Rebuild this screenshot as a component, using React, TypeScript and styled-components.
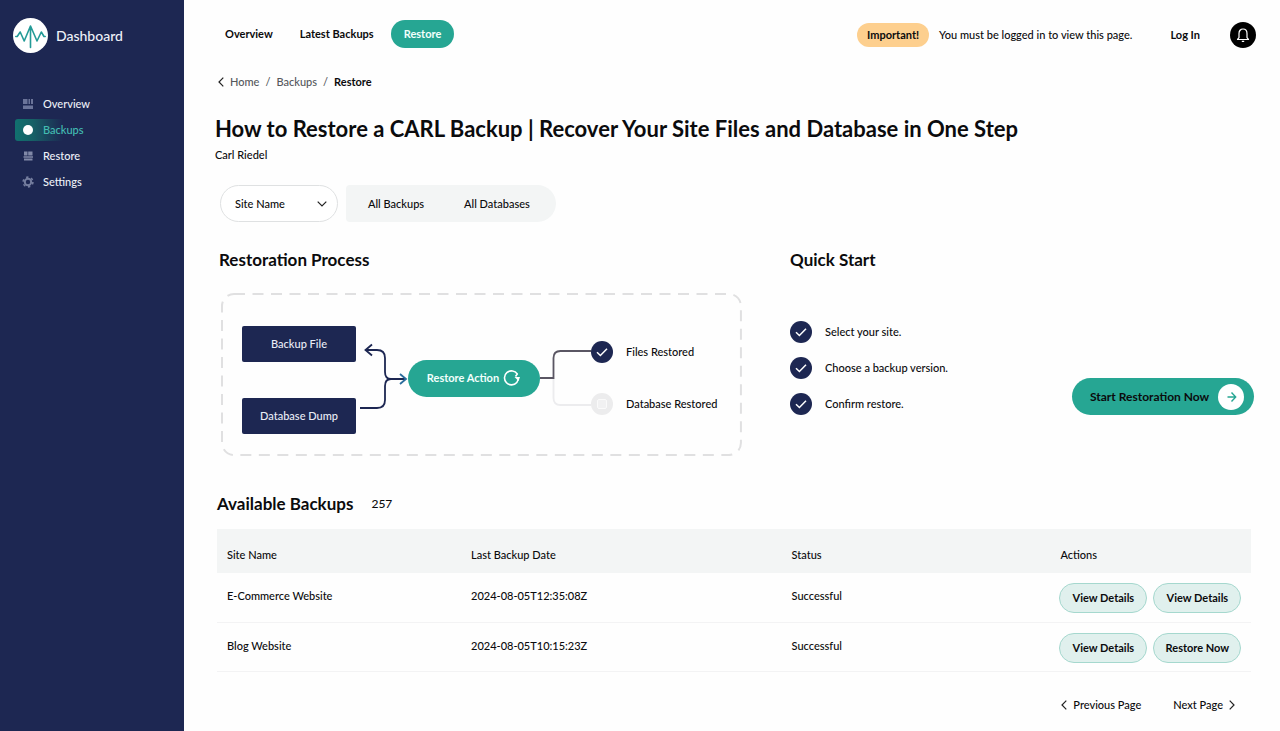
import React from 'react';
import styled, { createGlobalStyle } from 'styled-components';

const navy = '#1d2752';
const teal = '#26a693';

const GlobalStyle = createGlobalStyle`
  * { box-sizing: border-box; }
  body {
    margin: 0;
    background: #fefefe;
    color: #0b0b0d;
    font: 500 11px/16px Lato, "Open Sans", sans-serif;
  }
  button, select { font: inherit; color: inherit; cursor: pointer; }
  a { color: inherit; text-decoration: none; }
  h1, h2, p, ul, ol { margin: 0; padding: 0; }
  ul, ol { list-style: none; }
  svg { display: block; flex: none; }
`;

const Page = styled.div`
  display: flex;
  min-height: 100vh;
`;

const Sidebar = styled.aside`
  flex: none;
  width: 184px;
  padding: 18px 13px;
  background: ${navy};
  color: #eef1f8;
`;

const Brand = styled.a`
  display: flex;
  align-items: center;
  gap: 8px;
  font-size: 14px;
  line-height: 20px;
`;

const SideNav = styled.nav`
  display: grid;
  gap: 4px;
  margin: 40px 0 0 2px;
`;

const SideLink = styled.a<{ $active?: boolean }>`
  display: flex;
  align-items: center;
  gap: 9px;
  height: 22px;
  padding-left: 7px;
  border-radius: 3px;
  color: ${p => (p.$active ? '#43bdb2' : '#eef1f8')};
  background: ${p => (p.$active ? 'linear-gradient(90deg, #11716f 0, #176066 18px, transparent 48px)' : 'none')};
`;

const Main = styled.main`
  flex: 1;
  min-width: 0;
  padding: 20px 24px 16px 31px;
`;

const TopBar = styled.header`
  display: flex;
  align-items: center;
  justify-content: space-between;
  height: 28px;
`;

const Tabs = styled.nav`
  display: flex;
  align-items: center;
  gap: 7px;
  font-weight: 700;
`;

const Tab = styled.a<{ $active?: boolean }>`
  padding: 6px ${p => (p.$active ? 13 : 10)}px;
  border-radius: 14px;
  color: ${p => (p.$active ? '#f2fffc' : 'inherit')};
  background: ${p => (p.$active ? teal : 'none')};
`;

const Notice = styled.div`
  display: flex;
  align-items: center;
  padding-top: 2px;
`;

const Badge = styled.strong`
  margin-right: 10px;
  padding: 4px 10px;
  border-radius: 12px;
  background: #fdcf8e;
`;

const LoginLink = styled.a`
  margin: 0 30px 0 38px;
  font-weight: 700;
`;

const BellButton = styled.button`
  display: grid;
  place-items: center;
  width: 26px;
  height: 26px;
  padding: 0;
  border: 0;
  border-radius: 50%;
  background: #000;
`;

const Crumbs = styled.nav`
  display: flex;
  align-items: center;
  gap: 6px;
  margin-top: 26px;
  padding-left: 3px;
  color: #55585c;
`;

const Current = styled.span`
  color: #0b0b0d;
  font-weight: 700;
`;

const Title = styled.h1`
  margin-top: 25px;
  font-size: 22px;
  line-height: 28px;
`;

const Author = styled.p`
  margin-top: 4px;
`;

const Filters = styled.div`
  display: flex;
  gap: 8px;
  margin: 22px 0 0 5px;
`;

const SelectWrap = styled.div`
  display: grid;
  align-items: center;
  width: 118px;
  > * { grid-area: 1 / 1; }
  > svg { justify-self: end; margin-right: 11px; pointer-events: none; }
`;

const SiteSelect = styled.select`
  width: 100%;
  height: 37px;
  padding: 0 14px;
  border: 1px solid #dfe1e2;
  border-radius: 19px;
  background: #fff;
  appearance: none;
`;

const Segments = styled.div`
  display: flex;
  gap: 4px;
  padding: 0 8px 0 4px;
  border-radius: 4px 19px 19px 4px;
  background: #f3f5f5;
`;

const Segment = styled.button`
  height: 37px;
  padding: 0 18px;
  border: 0;
  background: none;
`;

const Columns = styled.div`
  display: grid;
  grid-template-columns: 571fr 464fr;
  margin: 27px 2px 0 4px;
`;

const SectionTitle = styled.h2`
  font-size: 17px;
  line-height: 22px;
`;

const Panel = styled.div`
  position: relative;
  display: flex;
  align-items: center;
  height: 163px;
  margin: 22px 48px 0 2px;
  padding: 33px 21px 22px;
`;

const Dashes = styled.svg`
  position: absolute;
  inset: 0;
  width: 100%;
  height: 100%;
  pointer-events: none;
`;

const Sources = styled.div`
  display: grid;
  gap: 36px;
  width: 114px;
`;

const Source = styled.div`
  display: grid;
  place-items: center;
  height: 36px;
  border-radius: 2px;
  background: ${navy};
  color: #e9ecf6;
`;

const Flow = styled.div`
  display: flex;
  align-items: center;
  padding-bottom: 4px;
`;

const RestoreAction = styled.button`
  display: flex;
  align-items: center;
  justify-content: center;
  gap: 4px;
  width: 132px;
  height: 37px;
  padding: 0;
  border: 0;
  border-radius: 19px;
  background: ${teal};
  color: #f2fffc;
  font-weight: 700;
`;

const Results = styled.ul`
  display: grid;
  gap: 30px;
`;

const IconRow = styled.li`
  display: flex;
  align-items: center;
  gap: 13px;
  height: 22px;
  white-space: nowrap;
`;

const QuickBody = styled.div`
  display: flex;
  justify-content: space-between;
  align-items: flex-end;
  margin-top: 50px;
`;

const Steps = styled.ol`
  display: grid;
  gap: 14px;
`;

const StartButton = styled.button`
  display: flex;
  align-items: center;
  justify-content: space-between;
  width: 182px;
  height: 37px;
  padding: 0 10px 0 18px;
  border: 0;
  border-radius: 19px;
  background: ${teal};
  font-size: 12px;
  font-weight: 700;
`;

const Backups = styled.section`
  margin: 37px 5px 0 2px;
`;

const BackupsHead = styled.div`
  display: flex;
  align-items: center;
  gap: 18px;
`;

const Count = styled.span`
  font-size: 12px;
`;

const Table = styled.table`
  width: 100%;
  margin-top: 14px;
  border-collapse: collapse;
  table-layout: fixed;
  text-align: left;
  th { height: 44px; padding: 8px 10px 0; background: #f3f5f5; font-weight: 500; }
  td { height: 49px; padding: 0 10px 2px; border-bottom: 1px solid #f3f3f4; }
  td:last-child { padding: 2px 8px 0 9px; }
`;

const Col = styled.col<{ $w: number }>`
  width: ${p => p.$w}%;
`;

const Actions = styled.div`
  display: flex;
  gap: 6px;
`;

const ActionButton = styled.button`
  width: 88px;
  height: 30px;
  padding: 0;
  border: 1px solid #a5d8ce;
  border-radius: 15px;
  background: #e0f0ed;
  font-weight: 700;
`;

const Pager = styled.nav`
  display: flex;
  justify-content: flex-end;
  gap: 32px;
  margin: 25px 16px 0 0;
  a { display: flex; align-items: center; gap: 6px; }
`;

const Chevron = ({ d, w = 6, h = 10 }: { d: string; w?: number; h?: number }) => (
  <svg width={w} height={h} viewBox={`0 0 ${w} ${h}`} fill="none" stroke="#222" strokeWidth="1.2"><path d={d} /></svg>
);
const left = 'M5.3 .7 1 5l4.3 4.3';
const right = 'M.7 .7 5 5 .7 9.3';

const Check = () => (
  <svg width="22" height="22" viewBox="0 0 22 22" fill="none">
    <circle cx="11" cy="11" r="11" fill={navy} />
    <path d="m6 11.2 3.4 3.3L16 7.8" stroke="#fff" strokeWidth="1.5" />
  </svg>
);

const Pending = () => (
  <svg width="22" height="22" viewBox="0 0 22 22" fill="none">
    <circle cx="11" cy="11" r="11" fill="#ececed" />
    <rect x="6.5" y="6.5" width="9" height="9" rx="1.5" fill="#f1f1f2" stroke="#fafafa" />
  </svg>
);

const Logo = () => (
  <svg width="35" height="35" viewBox="0 0 35 35" fill="none">
    <circle cx="17.5" cy="17.5" r="17.5" fill="#fff" />
    <path d="M2.8 18.5h1.4L7.2 14l4 9L17.5 8 24 23l4.3-9 2.7 4.5h1.2M17.5 8v21.5" stroke="#249b97" strokeWidth="1.6" strokeLinejoin="round" strokeLinecap="round" />
  </svg>
);

const GridIcon = () => (
  <svg width="12" height="12" viewBox="0 0 12 12" fill="#6b7499">
    <path d="M1 1h4.5v5H1zM6.5 1H8v5H6.5zM9 1h2v5H9zM1 7.5h10V11H1z" />
  </svg>
);

const DotIcon = () => (
  <svg width="12" height="12" viewBox="0 0 12 12"><circle cx="6" cy="6" r="5" fill="#fff" /></svg>
);

const StackIcon = () => (
  <svg width="12" height="12" viewBox="0 0 12 12" fill="#8189a8">
    <path d="M2 1.5h3.5v4H2zM6.2 1.5h4.3v4H6.2zM1.5 6.3H11v1.5H1.5zM2 8.5h8.5v2H2z" />
  </svg>
);

const GearIcon = () => (
  <svg width="12" height="12" viewBox="0 0 12 12" fill="none" stroke="#747d9e">
    <circle cx="6" cy="6" r="3.2" strokeWidth="2" />
    <circle cx="6" cy="6" r="4.9" strokeWidth="1.6" strokeDasharray="2.4 2.731" />
  </svg>
);

const sideItems = [
  { label: 'Overview', icon: <GridIcon /> },
  { label: 'Backups', icon: <DotIcon />, active: true },
  { label: 'Restore', icon: <StackIcon /> },
  { label: 'Settings', icon: <GearIcon /> },
];

const rows = [
  { site: 'E-Commerce Website', date: '2024-08-05T12:35:08Z', status: 'Successful', actions: ['View Details', 'View Details'] },
  { site: 'Blog Website', date: '2024-08-05T10:15:23Z', status: 'Successful', actions: ['View Details', 'Restore Now'] },
];

export default function App() {
  return (
    <Page>
      <GlobalStyle />
      <Sidebar>
        <Brand href="#"><Logo />Dashboard</Brand>
        <SideNav aria-label="Sections">
          {sideItems.map(i => (
            <SideLink key={i.label} href="#" $active={i.active}>{i.icon}{i.label}</SideLink>
          ))}
        </SideNav>
      </Sidebar>
      <Main>
        <TopBar>
          <Tabs aria-label="Main">
            <Tab href="#">Overview</Tab>
            <Tab href="#">Latest Backups</Tab>
            <Tab href="#" $active>Restore</Tab>
          </Tabs>
          <Notice>
            <Badge>Important!</Badge>
            <span>You must be logged in to view this page.</span>
            <LoginLink href="#">Log In</LoginLink>
            <BellButton aria-label="Notifications">
              <svg width="14" height="16" viewBox="0 0 14 16" fill="none" stroke="#fff" strokeWidth="1.2">
                <path d="M1.5 12.5h11L11 10.7V6.5C11 3.800 9.200 2 7 2S3 3.800 3 6.500v4.200zM5.800 14.300h2.400" strokeLinejoin="round" />
              </svg>
            </BellButton>
          </Notice>
        </TopBar>
        <Crumbs aria-label="Breadcrumb">
          <Chevron d={left} />
          <a href="#">Home</a><span>/</span><a href="#">Backups</a><span>/</span>
          <Current aria-current="page">Restore</Current>
        </Crumbs>
        <Title>How to Restore a CARL Backup | Recover Your Site Files and Database in One Step</Title>
        <Author>Carl Riedel</Author>
        <Filters>
          <SelectWrap>
            <SiteSelect aria-label="Site Name"><option>Site Name</option></SiteSelect>
            <Chevron d="m.7 .7 4.3 4.3L9.3 .7" w={10} h={6} />
          </SelectWrap>
          <Segments>
            <Segment>All Backups</Segment>
            <Segment>All Databases</Segment>
          </Segments>
        </Filters>
        <Columns>
          <section>
            <SectionTitle>Restoration Process</SectionTitle>
            <Panel>
              <Dashes aria-hidden="true">
                <rect x="1" y="1" width="99.6%" height="98.8%" rx="12" fill="none" stroke="#e0e0e1" strokeWidth="2" strokeDasharray="11 7.5" />
              </Dashes>
              <Sources>
                <Source>Backup File</Source>
                <Source>Database Dump</Source>
              </Sources>
              <svg width="52" height="108" viewBox="0 0 52 108" fill="none" stroke={navy} strokeWidth="1.8">
                <path d="M10 24h11q8 0 8 8v14q0 7 6 7h14M4 82h17q8 0 8-8V60q0-7 6-7" />
                <path d="m16 18.5-6.5 5.5 6.5 5.5" />
                <path d="m44 48 6 5-6 5" stroke="#2a6c9c" />
              </svg>
              <Flow>
                <RestoreAction>
                  Restore Action
                  <svg width="18" height="18" viewBox="0 0 18 18" fill="none" stroke="#fff" strokeWidth="1.6">
                    <path d="M12.5 7.5 14.3 5A7 7 0 1 0 13.8 13.5L15.5 10" strokeLinejoin="round" />
                    <path d="M11.5 8H17l-1.500 4z" fill="#fff" stroke="none" />
                  </svg>
                </RestoreAction>
                <svg width="51" height="74" viewBox="0 0 51 74" fill="none" strokeWidth="1.8">
                  <path d="M13.5 37v20q0 7 7 7H51" stroke="#ececee" />
                  <path d="M0 37h13.5V17q0-7 7-7H51" stroke="#5a5663" />
                </svg>
                <Results>
                  <IconRow><Check />Files Restored</IconRow>
                  <IconRow><Pending />Database Restored</IconRow>
                </Results>
              </Flow>
            </Panel>
          </section>
          <section>
            <SectionTitle>Quick Start</SectionTitle>
            <QuickBody>
              <Steps>
                <IconRow><Check />Select your site.</IconRow>
                <IconRow><Check />Choose a backup version.</IconRow>
                <IconRow><Check />Confirm restore.</IconRow>
              </Steps>
              <StartButton>
                Start Restoration Now
                <svg width="26" height="26" viewBox="0 0 26 26" fill="none">
                  <circle cx="13" cy="13" r="13" fill="#fff" />
                  <path d="M9.5 13h8M13.5 8.5l4.2 4.5-4.2 4.5" stroke={teal} strokeWidth="1.4" />
                </svg>
              </StartButton>
            </QuickBody>
          </section>
        </Columns>
        <Backups>
          <BackupsHead>
            <SectionTitle>Available Backups</SectionTitle>
            <Count>257</Count>
          </BackupsHead>
          <Table>
            <colgroup><Col $w={23.6} /><Col $w={31} /><Col $w={26} /><Col $w={19.4} /></colgroup>
            <thead>
              <tr><th>Site Name</th><th>Last Backup Date</th><th>Status</th><th>Actions</th></tr>
            </thead>
            <tbody>
              {rows.map(r => (
                <tr key={r.site}>
                  <td>{r.site}</td><td>{r.date}</td><td>{r.status}</td>
                  <td><Actions>{r.actions.map((a, i) => <ActionButton key={i}>{a}</ActionButton>)}</Actions></td>
                </tr>
              ))}
            </tbody>
          </Table>
          <Pager aria-label="Pagination">
            <a href="#"><Chevron d={left} />Previous Page</a>
            <a href="#">Next Page<Chevron d={right} /></a>
          </Pager>
        </Backups>
      </Main>
    </Page>
  );
}
